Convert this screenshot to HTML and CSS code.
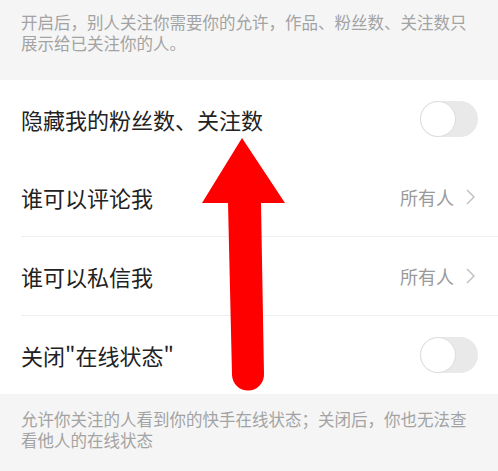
FILE: index.html
```html
<!DOCTYPE html>
<html lang="zh-CN">
<head>
    <meta charset="UTF-8">
    <meta name="viewport" content="width=device-width, initial-scale=1.0">
    <title>隐私设置</title>
    <link rel="stylesheet" href="styles.css">
</head>
<body>
    <div class="page">
        <p class="tip tip-top">开启后，别人关注你需要你的允许，作品、粉丝数、关注数只展示给已关注你的人。</p>

        <div class="list">
            <div class="row no-line">
                <span class="label">隐藏我的粉丝数、关注数</span>
                <span class="switch"><span class="knob"></span></span>
            </div>
            <div class="row">
                <span class="label">谁可以评论我</span>
                <span class="value">所有人
                    <svg class="chev" width="9" height="16" viewBox="0 0 9 16"><path d="M1 1 L8 8 L1 15" fill="none" stroke="#bdbdbd" stroke-width="1.4"/></svg>
                </span>
            </div>
            <div class="row">
                <span class="label">谁可以私信我</span>
                <span class="value">所有人
                    <svg class="chev" width="9" height="16" viewBox="0 0 9 16"><path d="M1 1 L8 8 L1 15" fill="none" stroke="#bdbdbd" stroke-width="1.4"/></svg>
                </span>
            </div>
            <div class="row no-line">
                <span class="label">关闭"在线状态"</span>
                <span class="switch"><span class="knob"></span></span>
            </div>
        </div>

        <p class="tip tip-bottom">允许你关注的人看到你的快手在线状态；关闭后，你也无法查看他人的在线状态</p>

        <!-- red arrow drawn over the screenshot -->
        <svg class="arrow" width="498" height="471" viewBox="0 0 498 471">
            <path d="M242 138 L285 203 L261 203 L264 374 A16 16 0 0 1 232 375 L228 203 L202 203 Z" fill="#ff0000"/>
        </svg>
    </div>
</body>
</html>
```

FILE: styles.css
```css
body {
    margin: 0;
    background-color: #f5f5f5;
    font-family: "Noto Sans CJK SC", "Noto Sans", sans-serif;
}
.page {
    position: relative;
    width: 498px;
    height: 471px;
    overflow: hidden;
}
.tip {
    margin: 0;
    color: #a3a3a3;
    font-size: 16.5px;
    line-height: 21px;
    padding-left: 21px;
    padding-right: 26px;
    box-sizing: border-box;
}
.tip-top {
    height: 80px;
    padding-top: 12px;
}
.tip-bottom {
    padding-top: 15px;
}
.list {
    background-color: white;
    padding-left: 21px;
}
.row {
    height: 78px;
    display: flex;
    align-items: center;
    justify-content: space-between;
    padding-right: 20px;
    border-bottom: 1px solid #efefef;
}
.row.no-line {
    border-bottom: none;
}
.label {
    font-size: 22px;
    color: #222;
}
.value {
    display: flex;
    align-items: center;
    gap: 12px;
    font-size: 18px;
    color: #9a9a9a;
    margin-right: 3px;
}
.switch {
    width: 58px;
    height: 36px;
    border-radius: 18px;
    background-color: #e9e9e9;
    display: flex;
    align-items: center;
}
.knob {
    width: 34px;
    height: 34px;
    border-radius: 50%;
    background-color: white;
    border: 1px solid #dcdcdc;
}
.arrow {
    position: absolute;
    left: 0;
    top: 0;
    pointer-events: none;
}
```
